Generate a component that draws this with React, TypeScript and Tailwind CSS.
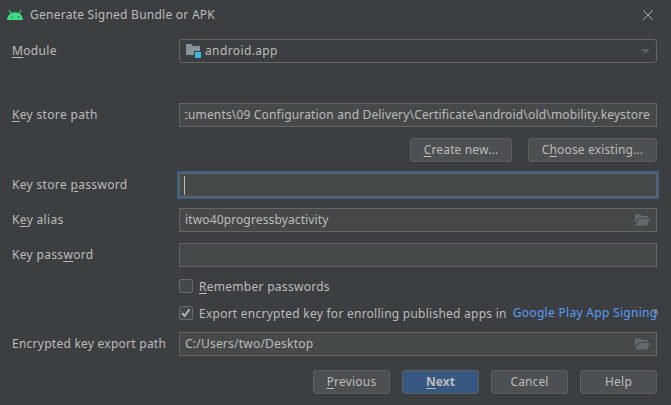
import type { ReactNode } from 'react';

function Label({ children, className = 'tracking-[0.33px]' }: { children: ReactNode; className?: string }) {
  return <div className={`w-[167px] shrink-0 whitespace-pre pl-px ${className}`}>{children}</div>;
}

function Key({ children }: { children: ReactNode }) {
  return <span className="underline decoration-1 underline-offset-2">{children}</span>;
}

function Row({ children, className = '' }: { children: ReactNode; className?: string }) {
  return <div className={`flex h-6 items-center ${className}`}>{children}</div>;
}

function Field({ children, className = '' }: { children?: ReactNode; className?: string }) {
  return (
    <div className={`flex h-6 w-[478px] items-center border border-[#646464] bg-[#45494a] px-[5px] ${className}`}>
      {children}
    </div>
  );
}

function Button({ children, className = '' }: { children: ReactNode; className?: string }) {
  return (
    <button
      type="button"
      className={`flex h-6 items-center justify-center whitespace-pre rounded-[3px] border border-[#5e6060] bg-[#4c5052] shadow-[0_1px_0_#36393b] ${className}`}
    >
      {children}
    </button>
  );
}

function OpenFolder() {
  return (
    <svg width="16" height="12" viewBox="0 0 16 12" className="ml-auto">
      <path d="M0 .5h5l2 1.500h6v2H3L0 9.500z" fill="#626a6e" />
      <path d="M3.600 5H15l-2.800 6.500H.5z" fill="#626a6e" />
    </svg>
  );
}

export default function App() {
  return (
    <div className="h-[405px] w-[671px] overflow-hidden bg-[#3c3f41] font-['Noto_Sans',sans-serif] text-[12px] leading-4 text-[#bbbbbb]">
      <header className="flex h-[29px] items-center pl-[7px] pr-[18px]">
        <svg width="16" height="10" viewBox="0 0 16 10">
          <path d="M4 3.500 2 .2M12 3.500 14 .2" stroke="#3ddc84" strokeWidth="1.100" />
          <path d="M0 10C.3 5.500 3.500 2.200 8 2.200s7.700 3.300 8 7.800z" fill="#3ddc84" />
          <circle cx="4.500" cy="7" r=".75" fill="#31563f" />
          <circle cx="11.500" cy="7" r=".75" fill="#31563f" />
        </svg>
        <h1 className="ml-[7px] whitespace-pre tracking-[0.25px]">Generate Signed Bundle or APK</h1>
        <svg width="10" height="10" viewBox="0 0 10 10" className="ml-auto">
          <path d="m.3.300 9.400 9.400M9.700.300.3 9.700" stroke="#afb1b3" />
        </svg>
      </header>
      <main className="px-[11px] pt-[10px]">
        <Row>
          <Label><Key>M</Key>odule</Label>
          <div className="ml-px flex h-6 w-[478px] items-center rounded-[3px] border border-[#646464] pl-[6px] pr-[6px]">
            <svg width="16" height="14" viewBox="0 0 16 14">
              <path d="M0 0h5l2 2h7v5H8v4H0z" fill="#87939a" />
              <path d="M9 8h6v6H9z" fill="#40b6e0" />
            </svg>
            <span className="ml-[3px] tracking-[0.38px]">android.app</span>
            <svg width="9" height="5" viewBox="0 0 9 5" className="ml-auto">
              <path d="M0 0h9L4.500 5z" fill="#5c5f61" />
            </svg>
          </div>
        </Row>
        <Row className="mt-10">
          <Label><Key>K</Key>ey store path</Label>
          <Field className="ml-px justify-end pr-[6px]">
            <div className="flex w-full justify-end overflow-hidden whitespace-pre tracking-[0.17px]">
              cuments\09 Configuration and Delivery\Certificate\android\old\mobility.keystore
            </div>
          </Field>
        </Row>
        <div className="mt-[11px] flex justify-end gap-4 pr-[3px]">
          <Button className="w-[102px] tracking-[0.15px]"><Key>C</Key>reate new...</Button>
          <Button className="w-[129px] tracking-[0.15px]">C<Key>h</Key>oose existing...</Button>
        </div>
        <Row className="mt-[11px]">
          <Label>Key store <Key>p</Key>assword</Label>
          <Field className="ml-px border-[#466d94] outline-2 outline-[#3d6185]">
            <span className="-ml-px h-[19px] w-px bg-[#bbbbbb]" />
          </Field>
        </Row>
        <Row className="mt-[11px]">
          <Label>K<Key>e</Key>y alias</Label>
          <Field className="ml-px tracking-[0.13px]">itwo40progressbyactivity<OpenFolder /></Field>
        </Row>
        <Row className="mt-[11px]">
          <Label>Key pass<Key>w</Key>ord</Label>
          <Field className="ml-px" />
        </Row>
        <div className="mt-3 flex h-[14px] items-center pl-[168px]">
          <span className="size-[14px] rounded-[2px] border border-[#6b6b6b] bg-[#43494a]" />
          <span className="ml-[6px] pt-0.5 tracking-[0.28px]"><Key>R</Key>emember passwords</span>
        </div>
        <div className="mt-[13px] flex h-[14px] items-center whitespace-pre pl-[168px]">
          <span className="flex size-[14px] shrink-0 items-center justify-center rounded-[2px] border border-[#6b6b6b] bg-[#43494a]">
            <svg width="10" height="10" viewBox="0 0 10 10" fill="none">
              <path d="m1.200 5 2.400 3L8.500 1.300" stroke="#bbbbbb" strokeWidth="1.900" />
            </svg>
          </span>
          <span className="ml-[6px] pt-0.5 tracking-[0.25px]">Export encrypted key for enrolling published apps in</span>
          <a className="ml-[6px] tracking-[0.3px] text-[#589df6]">Google Play App Signing</a>
          <svg width="5" height="6" viewBox="0 0 5 6" className="-ml-[5px] shrink-0 self-start mt-[3px]">
            <path d="M0 1h4V6M4 1 .5 4.500" stroke="#8c9297" fill="none" />
          </svg>
        </div>
        <Row className="mt-3">
          <Label className="tracking-[0.25px]">Encrypted key export path</Label>
          <Field className="ml-px tracking-[0.22px]">C:/Users/two/Desktop<OpenFolder /></Field>
        </Row>
        <footer className="mt-[14px] flex justify-end gap-3 pr-[3px]">
          <Button className="w-[77px] tracking-[0.2px]"><Key>P</Key>revious</Button>
          <Button className="w-[77px] border-[#4c708c] bg-[#365880] font-bold"><Key>N</Key>ext</Button>
          <Button className="w-[77px] tracking-[0.1px]">Cancel</Button>
          <Button className="w-[77px] tracking-[0.2px]">Help</Button>
        </footer>
      </main>
    </div>
  );
}
